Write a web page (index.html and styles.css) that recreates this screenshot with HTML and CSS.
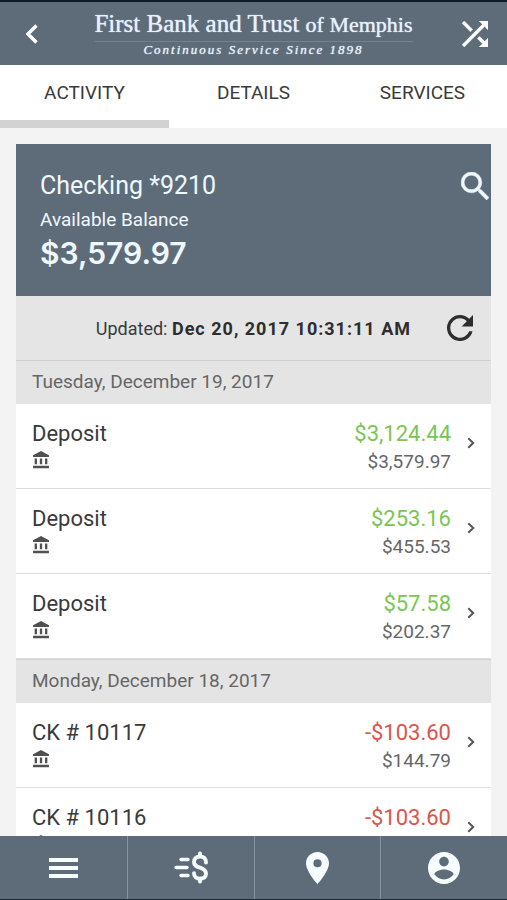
FILE: index.html
```html
<!DOCTYPE html>
<html lang="en">
<head>
<meta charset="utf-8">
<meta name="viewport" content="width=device-width, initial-scale=1">
<title>Checking *9210</title>
<link rel="stylesheet" href="styles.css">
</head>
<body>
<svg class="defs" aria-hidden="true">
  <symbol id="bank" viewBox="0 0 16 17"><path d="M8 0L15.500 4V5.700H.5V4ZM2 7.200h2.200V12.600H2ZM6.900 7.200h2.200V12.600H6.900ZM11.800 7.200h2.200V12.600H11.800ZM.5 14h15v2.200H.5Z"/></symbol>
  <symbol id="chevron" viewBox="0 0 8 12"><path d="M1.300 1.200L6.200 6L1.300 10.800" fill="none" stroke="currentColor" stroke-width="2"/></symbol>
</svg>
<header class="topbar">
  <button class="icon-button" aria-label="Back"><svg width="12" height="20" viewBox="0 0 12 20"><path d="M10.500 1.500L2 10L10.500 18.500" fill="none" stroke="currentColor" stroke-width="3.400"/></svg></button>
  <div class="brand">
    <h1>First Bank and Trust <span>of Memphis</span></h1>
    <p>Continuous Service Since 1898</p>
  </div>
  <button class="icon-button" aria-label="Transfer"><svg width="26" height="26" viewBox="4 4 16 16"><path fill="currentColor" stroke="currentColor" stroke-width=".2" d="M10.590 9.170L5.410 4 4 5.410l5.170 5.170 1.420-1.410zM14.500 4l2.040 2.040L4 18.590 5.410 20 17.960 7.460 20 9.500V4h-5.500zm.33 9.410l-1.410 1.410 3.130 3.130L14.500 20H20v-5.500l-2.040 2.040-3.130-3.130z"/></svg></button>
</header>
<nav class="tabs" aria-label="Account">
  <a href="#activity" class="active" aria-current="page">ACTIVITY</a>
  <a href="#details">DETAILS</a>
  <a href="#services">SERVICES</a>
</nav>
<main id="activity">
  <section class="account">
    <div>
      <h2>Checking *9210</h2>
      <p class="label">Available Balance</p>
      <p class="total">$3,579.97</p>
    </div>
    <button class="search" aria-label="Search"><svg width="28" height="28" viewBox="3 3 17.490 17.490"><path fill="currentColor" stroke="currentColor" stroke-width=".3" d="M15.500 14h-.79l-.28-.27A6.470 6.470 0 0 0 16 9.500 6.500 6.500 0 1 0 9.500 16c1.610 0 3.090-.59 4.230-1.570l.27.28v.79l5 4.990L20.490 19l-4.990-5zm-6 0C7.010 14 5 11.990 5 9.500S7.010 5 9.500 5 14 7.010 14 9.500 11.990 14 9.500 14z"/></svg></button>
  </section>
  <div class="updated">
    <p>Updated: <strong>Dec 20, 2017 10:31:11 AM</strong></p>
    <button aria-label="Refresh"><svg width="26" height="26" viewBox="4 4 16 16"><path fill="currentColor" d="M17.650 6.350A7.958 7.958 0 0 0 12 4a8 8 0 1 0 7.730 10h-2.080A6 6 0 1 1 12 6c1.660 0 3.140.69 4.220 1.780L13 11h7V4l-2.350 2.350z"/></svg></button>
  </div>
  <h3>Tuesday, December 19, 2017</h3>
  <a class="entry" href="#t1">
    <span class="what">Deposit<svg><use href="#bank"/></svg></span>
    <span class="sums"><span class="credit">$3,124.44</span><small>$3,579.97</small></span>
    <svg class="more"><use href="#chevron"/></svg>
  </a>
  <a class="entry" href="#t2">
    <span class="what">Deposit<svg><use href="#bank"/></svg></span>
    <span class="sums"><span class="credit">$253.16</span><small>$455.53</small></span>
    <svg class="more"><use href="#chevron"/></svg>
  </a>
  <a class="entry" href="#t3">
    <span class="what">Deposit<svg><use href="#bank"/></svg></span>
    <span class="sums"><span class="credit">$57.58</span><small>$202.37</small></span>
    <svg class="more"><use href="#chevron"/></svg>
  </a>
  <h3>Monday, December 18, 2017</h3>
  <a class="entry" href="#t4">
    <span class="what">CK # 10117<svg><use href="#bank"/></svg></span>
    <span class="sums"><span class="debit">-$103.60</span><small>$144.79</small></span>
    <svg class="more"><use href="#chevron"/></svg>
  </a>
  <a class="entry" href="#t5">
    <span class="what">CK # 10116<svg><use href="#bank"/></svg></span>
    <span class="sums"><span class="debit">-$103.60</span></span>
    <svg class="more"><use href="#chevron"/></svg>
  </a>
</main>
<footer class="dock">
  <button aria-label="Menu"><svg width="29" height="20" viewBox="0 0 29 20"><path fill="currentColor" d="M0 0h29v4H0ZM0 8h29v4H0ZM0 16h29v4H0Z"/></svg></button>
  <button aria-label="Payments"><svg width="34" height="33" viewBox="0 0 34 33"><g fill="none" stroke="currentColor" stroke-linecap="round"><path stroke-width="3.400" d="M7 8.500h7M2 16.500h11M7 24.500h7"/><path stroke-width="3.900" d="M32 11.500c0-4-2.500-6-6-6s-6 2-6 5.500c0 3.500 2.500 4.500 6 5.700s6 2.300 6 5.800c0 3.500-2.600 5.200-6 5.200s-6-2-6-5.500M26 2.500v3M26 27.500v3"/></g></svg></button>
  <button aria-label="Locations"><svg width="23" height="32" viewBox="5 2 14 20" preserveAspectRatio="none"><path fill="currentColor" d="M12 2C8.130 2 5 5.130 5 9c0 5.250 7 13 7 13s7-7.750 7-13c0-3.870-3.130-7-7-7zm0 9.500a2.500 2.500 0 0 1 0-5 2.500 2.500 0 0 1 0 5z"/></svg></button>
  <button aria-label="Profile"><svg width="32" height="32" viewBox="2 2 20 20"><path fill="currentColor" d="M12 2C6.480 2 2 6.480 2 12s4.480 10 10 10 10-4.480 10-10S17.520 2 12 2zm0 3c1.660 0 3 1.340 3 3s-1.340 3-3 3-3-1.340-3-3 1.340-3 3-3zm0 14.200c-2.500 0-4.710-1.280-6-3.220.03-1.990 4-3.080 6-3.080 1.990 0 5.970 1.090 6 3.080-1.290 1.940-3.500 3.220-6 3.220z"/></svg></button>
</footer>
</body>
</html>
```

FILE: styles.css
```css
* { box-sizing: border-box; }

body {
  margin: 0;
  height: 100vh;
  display: flex;
  flex-direction: column;
  background: #f3f3f4;
  color: #3a3a3a;
  font-family: Roboto, sans-serif;
  font-size: 18px;
}

h1, h2, h3, p { margin: 0; font-weight: 400; }
a { color: inherit; text-decoration: none; }
svg { display: block; }
.defs { display: none; }

button {
  padding: 0;
  border: 0;
  background: none;
  color: inherit;
  font: inherit;
  display: flex;
  align-items: center;
  justify-content: center;
}

.topbar {
  height: 65px;
  flex: none;
  border-top: 2px solid #0c1a2b;
  background: #5e6c7a;
  color: #fff;
  display: flex;
  align-items: center;
  justify-content: space-between;
}

.icon-button { width: 64px; height: 60px; }

.brand {
  color: #e6f1fc;
  font-family: "Liberation Serif", serif;
  text-align: center;
}

.brand h1 {
  font-size: 25px;
  line-height: 32px;
  border-bottom: 1px solid #74828f;
  text-shadow: 0 0 1px #e6f1fc;
}

.brand h1 span { font-size: 22px; }

.brand p {
  font-size: 13px;
  line-height: 16px;
  padding-bottom: 2px;
  font-style: italic;
  letter-spacing: 2px;
  text-shadow: 0 0 1px #e6f1fc;
}

.tabs {
  flex: none;
  display: grid;
  grid-template-columns: repeat(3, 1fr);
  height: 63px;
  background: #fff;
  font-size: 19px;
  line-height: 55px;
  text-align: center;
}

.tabs a { border-bottom: 8px solid transparent; }
.tabs .active { border-color: #d2d2d2; }

main {
  flex: 1;
  min-height: 0;
  overflow: hidden;
  padding: 16px 16px 0;
}

.account {
  display: flex;
  justify-content: space-between;
  align-items: flex-start;
  padding: 25px 2px 27px 24px;
  background: #5e6c7a;
  color: #f0f8ff;
}

.account h2 { font-size: 25px; line-height: 34px; }
.label { font-size: 19px; line-height: 34px; }
.total { font-family: Inter, sans-serif; font-size: 30px; line-height: 32px; font-weight: 600; }
.search { margin-top: 3px; }

.updated {
  display: flex;
  align-items: center;
  justify-content: flex-end;
  gap: 36px;
  height: 64px;
  padding-right: 18px;
  background: #e5e5e5;
}

.updated strong { color: #2e2e2e; letter-spacing: 1px; }
.updated button { color: #2e2e2e; }

h3 {
  padding: 0 16px 2px;
  background: #e4e4e4;
  border-top: 1px solid #d0d0d0;
  color: #666;
  font-size: 19px;
  line-height: 41px;
}

.entry {
  display: flex;
  height: 85px;
  padding: 13px 16px;
  background: #fff;
  border-bottom: 1px solid #dedede;
  font-size: 22px;
  line-height: 34px;
}

.what { flex: 1; }
.what svg { width: 18px; height: 18px; fill: #505050; }
.sums { text-align: right; }
.sums small { display: block; font-size: 19px; line-height: 21px; color: #666; }
.credit { color: #79c653; }
.debit { color: #d9564c; }
.more { width: 8px; height: 12px; margin: 20px 0 0 16px; color: #555; }

.dock {
  flex: none;
  display: grid;
  grid-template-columns: repeat(4, 1fr);
  height: 64px;
  background: #5e6c7a;
  color: #f6fcff;
  border-bottom: 1px solid #1b2937;
}

.dock button + button { border-left: 1px solid #8794a1; }
```
